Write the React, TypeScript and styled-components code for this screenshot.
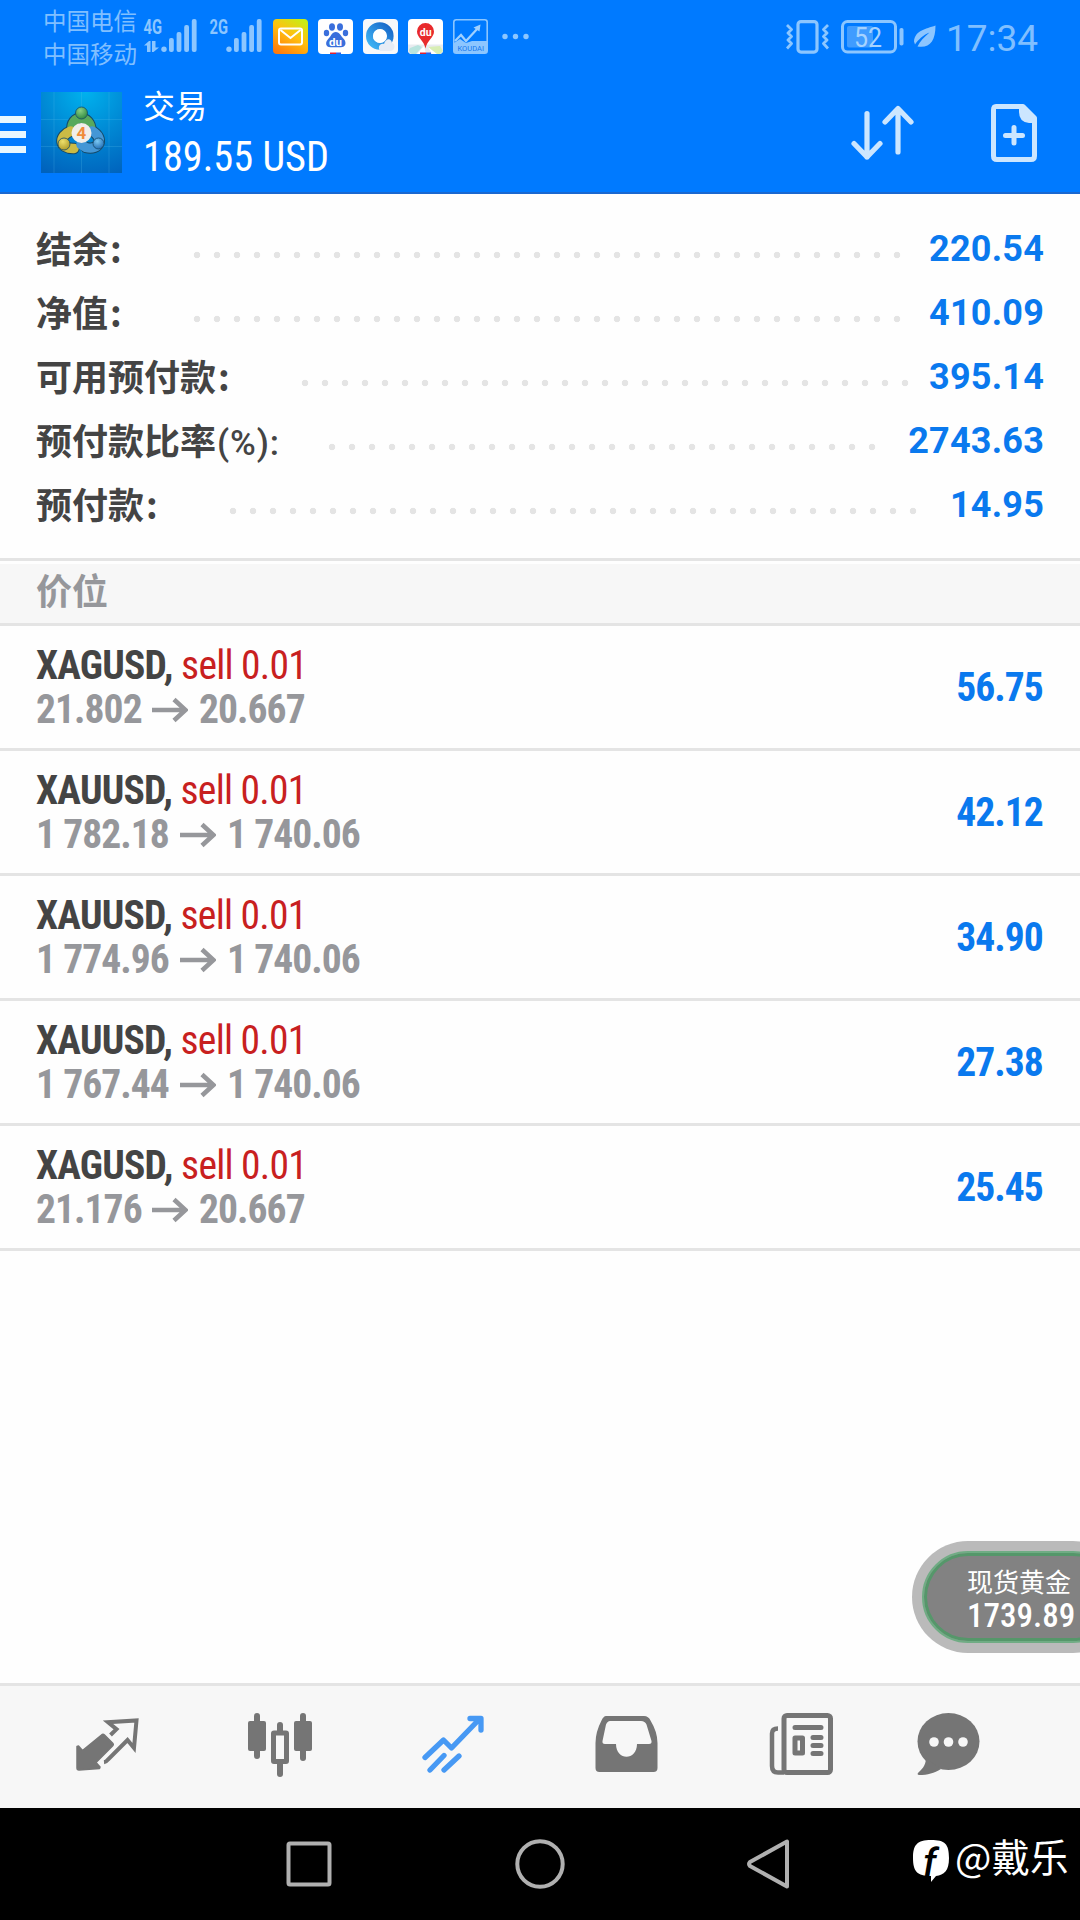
import React from 'react';
import styled, { createGlobalStyle } from 'styled-components';

const GlobalStyle = createGlobalStyle`
  * {
    box-sizing: border-box;
  }

  body {
    margin: 0;
    background: #fefefe;
    font-family: Roboto, 'Noto Sans CJK SC', sans-serif;
  }

  svg {
    display: block;
    flex: none;
  }
`;

const Screen = styled.div`
  display: flex;
  flex-direction: column;
  width: 1080px;
  height: 1920px;
  overflow: hidden;
  background: #fefefe;
`;

const Header = styled.header`
  height: 194px;
  background: #007aff;
  border-bottom: 2px solid #1a68d0;
`;

const StatusBar = styled.div`
  display: flex;
  align-items: flex-start;
  height: 73px;
  padding: 0 42px 0 43px;
  color: #80bfff;
`;

const Carriers = styled.div`
  width: 100px;
  padding-top: 4px;
  font-family: 'Noto Sans CJK SC', sans-serif;
  font-size: 23.5px;
  font-weight: 400;
  line-height: 33px;
  white-space: nowrap;
`;

const StatusIcons = styled.div`
  display: flex;
  gap: 10px;
  margin: 19px 0 0 9px;
`;

const StatusRight = styled.div`
  display: flex;
  align-items: flex-start;
  margin-left: auto;
  padding-top: 20px;
`;

const Clock = styled.div`
  width: 92px;
  margin: 0 0 0 10px;
  font-family: Roboto, sans-serif;
  font-size: 37px;
  font-weight: 400;
  line-height: 37px;
  white-space: nowrap;
`;

const Toolbar = styled.div`
  display: flex;
  align-items: flex-start;
  height: 119px;
  padding-right: 43px;
  color: #cce6ff;
`;

const MenuButton = styled.div`
  display: flex;
  flex-direction: column;
  gap: 8px;
  width: 26px;
  margin: 43px 15px 0 0;
`;

const MenuBar = styled.span`
  height: 7px;
  background: #e8f7ff;
`;

const Title = styled.div`
  margin-left: 21px;
  padding-top: 11px;
  color: #fff;
`;

const TitleName = styled.div`
  height: 48px;
  font-family: 'Noto Sans CJK SC', sans-serif;
  font-size: 32px;
  line-height: 40px;
`;

const Condensed = styled.div<{ $size: number; $weight?: number; $scale?: number; $spacing?: number; $right?: boolean }>`
  font-family: 'Roboto Condensed', Roboto, sans-serif;
  font-size: ${(p) => p.$size}px;
  font-weight: ${(p) => p.$weight || 400};
  letter-spacing: ${(p) => p.$spacing || 0}px;
  transform: scaleX(${(p) => p.$scale || 1});
  transform-origin: ${(p) => (p.$right ? 'right' : 'left')} center;
  white-space: nowrap;
`;

const Actions = styled.div`
  display: flex;
  gap: 77px;
  margin: 31px 0 0 auto;
`;

const Summary = styled.section`
  height: 364px;
  padding: 22px 37px 0 36px;
`;

const SummaryRow = styled.div`
  display: flex;
  align-items: center;
  height: 64px;
`;

const SummaryLabel = styled.div<{ $width: number }>`
  width: ${(p) => p.$width}px;
  margin-top: -2px;
  color: #444;
  font-family: 'Noto Sans CJK SC', sans-serif;
  font-size: 36px;
  font-weight: 700;
  line-height: 62px;
  white-space: nowrap;
`;

const Colon = styled.span`
  margin-left: 2px;
`;

const Narrow = styled.span`
  margin-left: 1px;
  font-family: Roboto, sans-serif;
  font-size: 35px;
  font-weight: 500;
  letter-spacing: 0.9px;
  line-height: 0;
`;

const Dots = styled.div<{ $count: number }>`
  width: ${(p) => p.$count * 20}px;
  height: 8px;
  margin-top: 14px;
  background: radial-gradient(circle at 10px 4px, #e4e4e4 2.9px, transparent 3.6px) 0 0 / 20px 8px repeat-x;
`;

const SummaryValue = styled.div`
  margin-top: 2px;
  margin-left: auto;
  margin-right: -1px;
  color: #0a79ee;
  font-size: 36px;
  font-weight: 700;
  letter-spacing: 0.2px;
  line-height: 62px;
`;

const SectionTitle = styled.div`
  height: 68px;
  padding-left: 36px;
  background: #f7f7f7;
  border-top: 3px solid #e4e4e4;
  border-bottom: 3px solid #e4e4e4;
  box-shadow: inset 0 3px 0 #fefefe;
  color: #96979b;
  font-family: 'Noto Sans CJK SC', sans-serif;
  font-size: 36px;
  font-weight: 700;
  line-height: 57px;
`;

const PositionRow = styled.div`
  display: flex;
  align-items: center;
  justify-content: space-between;
  height: 125px;
  padding: 0 37px 0 36px;
  border-bottom: 3px solid #e4e4e4;
`;

const Symbol = styled.div`
  height: 44px;
  color: #444;
  line-height: 44px;
`;

const Side = styled.span`
  color: #c8201f;
  font-weight: 400;
`;

const Prices = styled.div`
  display: flex;
  align-items: center;
  height: 44px;
  color: #96979b;
  line-height: 44px;
`;

const PriceText = styled.div<{ $width: number }>`
  width: ${(p) => p.$width}px;
`;

const Profit = styled.div`
  color: #0a79ee;
`;

const Spacer = styled.div`
  flex: 1;
`;

const TabBar = styled.nav`
  display: flex;
  height: 125px;
  padding-left: 76px;
  background: #f7f7f7;
  border-top: 3px solid #e4e4e4;
`;

const SystemNav = styled.div`
  display: flex;
  align-items: flex-start;
  height: 112px;
  padding: 31px 0 0 285px;
  background: #000;
  color: #fff;
`;

const Signature = styled.div`
  display: flex;
  margin-left: 123px;
  font-family: 'Noto Sans CJK SC', sans-serif;
  font-size: 38.5px;
  font-weight: 400;
  line-height: 32px;
  white-space: nowrap;
`;

const Quote = styled.div`
  position: absolute;
  top: 1541px;
  left: 912px;
  width: 168px;
  height: 112px;
  overflow: hidden;
`;

const QuotePill = styled.div`
  width: 217px;
  height: 112px;
  padding: 10px;
  border-radius: 56px;
  background: #bababa;
`;

const QuoteBody = styled.div`
  height: 92px;
  padding: 12px 0 0 43px;
  border: 2px solid #70ac84;
  border-radius: 46px;
  box-shadow: inset 0 0 0 3px #55976a;
  background: #828282;
  color: #fff;
`;

const QuoteName = styled.div`
  height: 31px;
  font-family: 'Noto Sans CJK SC', sans-serif;
  font-size: 26px;
  line-height: 31px;
`;

const summary = [
  { label: '结余', width: 151, dots: 36, value: '220.54' },
  { label: '净值', width: 151, dots: 36, value: '410.09' },
  { label: '可用预付款', width: 259, dots: 31, value: '395.14' },
  { label: '预付款比率', suffix: '(%):', width: 286, dots: 28, value: '2743.63' },
  { label: '预付款', width: 187, dots: 35, value: '14.95' },
];

const positions = [
  { symbol: 'XAGUSD', open: '21.802', current: '20.667', width: 116, profit: '56.75' },
  { symbol: 'XAUUSD', open: '1 782.18', current: '1 740.06', width: 144, profit: '42.12' },
  { symbol: 'XAUUSD', open: '1 774.96', current: '1 740.06', width: 144, profit: '34.90' },
  { symbol: 'XAUUSD', open: '1 767.44', current: '1 740.06', width: 144, profit: '27.38' },
  { symbol: 'XAGUSD', open: '21.176', current: '20.667', width: 116, profit: '25.45' },
];

function Signal({ network, data }: { network: string; data?: boolean }) {
  const width = data ? 66 : 55;
  const start = data ? 21 : 20;
  return (
    <svg width={width} height="73" fill="#8cc6ff">
      <text x="0.500" y="34" fontFamily="Roboto" fontSize="21" fontWeight="700" textLength="18.5" lengthAdjust="spacingAndGlyphs">{network}</text>
      {data && (
        <path d="M1 45.500h3V52h3.500V41H6zM9 41h3.500v6.500h3.500L10.500 52H9z" />
      )}
      <circle cx={start} cy="49.300" r="2.700" />
      {[38, 32, 25, 19].map((y, i) => (
        <rect key={y} x={start + 5 + i * 7.6} y={y} width="4.800" height={52 - y} rx="2" />
      ))}
    </svg>
  );
}

function MailIcon() {
  return (
    <svg width="35" height="35">
      <defs>
        <linearGradient id="mail" x1="0.2" y1="1" x2="0.8" y2="0">
          <stop offset="0" stopColor="#ff7a0c" />
          <stop offset="0.55" stopColor="#ffc010" />
          <stop offset="1" stopColor="#c6ee14" />
        </linearGradient>
      </defs>
      <rect width="35" height="35" rx="4" fill="url(#mail)" />
      <rect x="6" y="9.500" width="23" height="16" rx="2" fill="none" stroke="#fff" strokeWidth="2" />
      <path d="M7.500 11l10 8 10-8" fill="none" stroke="#fff" strokeWidth="2" />
    </svg>
  );
}

function PawIcon() {
  return (
    <svg width="35" height="35">
      <rect width="35" height="35" rx="4" fill="#fff" />
      <g fill="#3a6fdc">
        <ellipse cx="14" cy="8" rx="3" ry="3.700" />
        <ellipse cx="22" cy="8" rx="3" ry="3.700" />
        <ellipse cx="8.500" cy="14" rx="2.700" ry="3.300" />
        <ellipse cx="27.500" cy="14" rx="2.700" ry="3.300" />
        <path d="M17.800 13c4 0 5 4 8 7 3 3.500 2 8.300-3 8.300H12.500c-5 0-5.500-5-2.500-8 3-3 3.800-7.300 7.800-7.300z" />
      </g>
      <text x="11" y="26.500" fontFamily="Roboto" fontSize="11.500" fontWeight="700" fill="#fff">du</text>
      <path d="M12 33.500h6V35h-6z" fill="#e02030" />
      <path d="M18 33.500h5V35h-5z" fill="#3060e0" />
    </svg>
  );
}

function BrowserIcon() {
  return (
    <svg width="35" height="35">
      <defs>
        <linearGradient id="ring" x1="1" y1="0" x2="0" y2="1">
          <stop offset="0" stopColor="#1766c8" />
          <stop offset="1" stopColor="#3fb5f5" />
        </linearGradient>
      </defs>
      <rect width="35" height="35" rx="4" fill="#f7f8fa" />
      <circle cx="16.800" cy="17" r="10.300" fill="none" stroke="url(#ring)" strokeWidth="7" />
      <circle cx="17" cy="17" r="7" fill="#fff" />
      <path d="M17 32c-3-5 1-8 4-7 2-6 7-6 8-1 4 1 3 7-1 8z" fill="#e6ecf5" />
    </svg>
  );
}

function MapIcon() {
  return (
    <svg width="35" height="35">
      <rect width="35" height="35" rx="4" fill="#fff" />
      <path d="M0 25.500h35V31q0 4-4 4H4q-4 0-4-4z" fill="#e9ebef" />
      <path d="M2 29l8-3 4 2-6 7H4q-3-1-3-4z" fill="#b8e4de" />
      <path d="M20 28l12-1 3 5-3 3h-6z" fill="#d8eeb4" />
      <path d="M9 35l7-8 2 8zM20 28l9 7h-5z" fill="#fff" />
      <path d="M17.500 4a8.500 8.500 0 0 1 8.500 8.500c0 6-7 9-8.500 17-1.500-8-8.500-11-8.500-17A8.500 8.500 0 0 1 17.500 4z" fill="#e82a2c" />
      <text x="11.800" y="17" fontFamily="Roboto" fontSize="10.500" fontWeight="700" fill="#fff">du</text>
      <path d="M12 33.500h6V35h-6z" fill="#e02030" />
      <path d="M18 33.500h5V35h-5z" fill="#3060e0" />
    </svg>
  );
}

function KoudaiIcon() {
  return (
    <svg width="35" height="35">
      <rect x="0.800" y="0.800" width="33.400" height="33.400" rx="2.500" fill="none" stroke="#8cc6ff" strokeWidth="1.600" />
      <path d="M1 24l6-4 6 4 6-2h15v12H1z" fill="#8cc6ff" />
      <path d="M2 22l6-6 5 6L25 9" fill="none" stroke="#9fd0ff" strokeWidth="2.200" />
      <path d="M27.500 5.500l-1 7-6-4z" fill="#9fd0ff" />
      <text x="4.500" y="31.500" fontFamily="Roboto" fontSize="7.500" fill="#1478ee" textLength="26.500" lengthAdjust="spacingAndGlyphs">KOUDAI</text>
    </svg>
  );
}

function VibrateIcon() {
  return (
    <svg width="43" height="34" fill="none" stroke="#8cc6ff" strokeWidth="3.200" strokeLinejoin="round">
      <rect x="12" y="1.600" width="19" height="30.500" rx="3" />
      <path d="M1 5l4.500 4.500L2 13l3.500 3.500L2 20l3.500 3.500L1 28.500M42 5l-4.500 4.500L41 13l-3.500 3.500L41 20l-3.500 3.500L42 28.500" strokeWidth="2.800" />
    </svg>
  );
}

function BatteryIcon({ level }: { level: number }) {
  return (
    <svg width="64" height="34">
      <rect x="1.500" y="1.500" width="53" height="30.500" rx="5" fill="none" stroke="#8cc6ff" strokeWidth="3" />
      <rect x="6" y="6" width={level * 0.5} height="21.500" rx="2" fill="#409cff" />
      <rect x="58.500" y="8" width="4" height="17.500" rx="1.800" fill="#8cc6ff" />
      <text x="13" y="26.500" fontFamily="Roboto" fontSize="27" fill="#a6d3ff" textLength="28" lengthAdjust="spacingAndGlyphs">{level}</text>
    </svg>
  );
}

function LeafIcon() {
  return (
    <svg width="22" height="34">
      <path d="M21.500 5.500c-10 3.500-20.500 5-21.500 16l1 3C4 20 9 15 15.500 12.500 10 17 6 21.500 3.500 26.500c12 2 18-5 18-21z" fill="#8cc6ff" />
    </svg>
  );
}

function Logo() {
  return (
    <svg width="81" height="81" style={{ marginTop: 19 }}>
      <defs>
        <radialGradient id="sky" cx="0.55" cy="0" r="1.1">
          <stop offset="0" stopColor="#00b2ee" />
          <stop offset="0.5" stopColor="#0088d4" />
          <stop offset="1" stopColor="#0062bc" />
        </radialGradient>
        <radialGradient id="green" cx="0.4" cy="0.3" r="0.8">
          <stop offset="0" stopColor="#8ccf82" />
          <stop offset="1" stopColor="#23813a" />
        </radialGradient>
        <radialGradient id="gold" cx="0.4" cy="0.3" r="0.8">
          <stop offset="0" stopColor="#eddf6b" />
          <stop offset="1" stopColor="#aa9422" />
        </radialGradient>
        <radialGradient id="azure" cx="0.4" cy="0.3" r="0.8">
          <stop offset="0" stopColor="#7cc9f3" />
          <stop offset="1" stopColor="#1763ae" />
        </radialGradient>
      </defs>
      <rect width="81" height="81" fill="url(#sky)" />
      <path d="M13 0v81M40.500 0v81M68 0v81M0 27.500h81M0 54.500h81" stroke="#5cc4ee" strokeOpacity="0.22" />
      <g fill="none" strokeLinecap="round">
        <g stroke="#164a68" strokeWidth="11.500">
          <path d="M31 39c-2-17 19-17 19 0" />
          <path d="M30 39c-13 5-12 18 3 17.500" />
          <path d="M51 39c13 7 7 20-6 16.500" />
        </g>
        <path d="M31 39c-2-17 19-17 19 0" stroke="#58a95c" strokeWidth="9.500" />
        <path d="M30 39c-13 5-12 18 3 17.500" stroke="#cbbb45" strokeWidth="9.500" />
        <path d="M51 39c13 7 7 20-6 16.500l-5-3" stroke="#4497d6" strokeWidth="9.500" />
      </g>
      <g stroke="#164a68" strokeWidth="0.800">
        <circle cx="40.500" cy="21" r="6" fill="url(#green)" />
        <circle cx="23" cy="52" r="6" fill="url(#gold)" />
        <circle cx="57.500" cy="51.500" r="5.500" fill="url(#azure)" />
      </g>
      <circle cx="40.500" cy="41" r="10" fill="#f1eeea" />
      <text x="40.500" y="47" textAnchor="middle" fontFamily="Roboto" fontSize="17" fontWeight="700" fill="#f08c3c">4</text>
    </svg>
  );
}

function SortIcon() {
  return (
    <svg width="63" height="58" fill="none" stroke="currentColor" strokeWidth="5.200" strokeLinecap="round" strokeLinejoin="round">
      <path d="M16 9.500V53M3 39.500L16 53l13-13.500M47 48V4.500M34 18L47 4.500 60 18" />
    </svg>
  );
}

function NewOrderIcon() {
  return (
    <svg width="46" height="58">
      <path d="M5 2.500h27L43.500 14v38q0 3.500-3.500 3.500H6q-3.500 0-3.500-3.500V6q0-3.500 2.500-3.500z" fill="none" stroke="currentColor" strokeWidth="5" strokeLinejoin="round" />
      <path d="M28 3h5l11 11v5h-6Q28 18 28 8z" fill="currentColor" />
      <path d="M23 23.500V39M14.500 31.500h17" stroke="currentColor" strokeWidth="5" strokeLinecap="round" />
    </svg>
  );
}

function Arrow() {
  return (
    <svg width="36" height="26" style={{ margin: '1px 11px 0 0' }}>
      <path d="M0 13h34M22 2.500L33.500 13 22 23.500" fill="none" stroke="#96979b" strokeWidth="4.600" />
    </svg>
  );
}

function Tabs() {
  return (
    <TabBar>
      <svg width="64" height="122" style={{ marginRight: 106 }}>
        <path d="M25.500 48q1.500-1.500 3 0l8 8q1.500 1.500 0 3L20 75.500l4 4.500-.500 1.500L3 83q-2 0-2-2V59.500l1.500-.500L6.500 63.500z" fill="#757575" stroke="#757575" strokeWidth="1.500" strokeLinejoin="round" transform="translate(0 1)" />
        <path d="M35 47l6-5.800-8.500-7L61 32.500 58.500 60l-6.500-8L32.500 71.500q-2 2.500-4 2.700" fill="none" stroke="#757575" strokeWidth="4" transform="translate(-.500 2)" />
      </svg>
      <svg width="68" height="122" fill="#757575" style={{ marginRight: 106 }}>
        <rect x="2" y="35" width="18" height="30" rx="2" />
        <rect x="8" y="27" width="6" height="46" rx="3" />
        <rect x="48" y="35" width="18" height="30" rx="2" />
        <rect x="54" y="27" width="6" height="48" rx="3" />
        <rect x="31" y="36" width="6" height="12" rx="3" />
        <rect x="31" y="74" width="6" height="17" rx="3" />
        <rect x="27.500" y="47" width="13" height="28.500" rx="0.500" fill="none" stroke="#757575" strokeWidth="5" strokeLinejoin="round" />
      </svg>
      <svg width="66" height="122" fill="none" stroke="#4799f4" strokeWidth="5.300" strokeLinecap="round" strokeLinejoin="round" style={{ marginRight: 108 }}>
        <path d="M5 71.500l18.500-17.500 8 8L60 32.500M50 32.500h11v11.500" />
        <path d="M10 84l14-14.500M24 84l15-14" />
      </svg>
      <svg width="66" height="122" style={{ marginRight: 109 }}>
        <path d="M13.500 30h38q4.500 0 6.500 4.500Q65 46 65 57v25q0 4-4 4H7q-4 0-4-4V57Q3 46 9 34.500 11 30 13.500 30z" fill="#757575" transform="translate(-1.500)" />
        <path d="M17 35h31q4 0 5.500 3.500L58.500 55q.500 3-2.500 3H44c0 17-21 17-21 0H12q-3 0-2.500-3l3.500-16.500Q14.500 35 17 35z" fill="#f7f7f7" transform="translate(-1)" />
      </svg>
      <svg width="66" height="122" style={{ marginRight: 82 }} fill="none" stroke="#757575">
        <rect x="15" y="29.500" width="46.500" height="57" rx="3" strokeWidth="5" />
        <path d="M9 42.500q-6 0-6 5V80q0 6.500 6 6.500h6" strokeWidth="4.500" />
        <g strokeWidth="5" strokeLinecap="round">
          <path d="M26 41.500h26M44 51.500h8M44 59.500h8M44 67.500h8" />
          <rect x="26" y="52" width="7.500" height="15" strokeLinejoin="round" />
        </g>
      </svg>
      <svg width="64" height="122" fill="#757575">
        <ellipse cx="31.500" cy="55.500" rx="31" ry="28.500" />
        <path d="M9 72c0 8-5 12-8 15-1 1 0 2 1 2 9 0 15-2 22-6z" />
        <g fill="#f7f7f7">
          <circle cx="17" cy="56" r="4.800" />
          <circle cx="31.500" cy="56" r="4.800" />
          <circle cx="46" cy="56" r="4.800" />
        </g>
      </svg>
    </TabBar>
  );
}

function App() {
  return (
    <Screen>
      <GlobalStyle />
      <Header>
        <StatusBar>
          <Carriers>
            <div>中国电信</div>
            <div>中国移动</div>
          </Carriers>
          <Signal network="4G" data />
          <Signal network="2G" />
          <StatusIcons>
            <MailIcon />
            <PawIcon />
            <BrowserIcon />
            <MapIcon />
            <KoudaiIcon />
            <svg width="36" height="35" fill="#8cc6ff">
              <circle cx="7" cy="17.500" r="2.700" />
              <circle cx="17.500" cy="17.500" r="2.700" />
              <circle cx="28" cy="17.500" r="2.700" />
            </svg>
          </StatusIcons>
          <StatusRight>
            <VibrateIcon />
            <svg width="12" height="34" />
            <BatteryIcon level={52} />
            <svg width="9" height="34" />
            <LeafIcon />
            <Clock>17:34</Clock>
          </StatusRight>
        </StatusBar>
        <Toolbar>
          <MenuButton>
            <MenuBar />
            <MenuBar />
            <MenuBar />
          </MenuButton>
          <Logo />
          <Title>
            <TitleName>交易</TitleName>
            <Condensed $size={42} $scale={0.96}>189.55 USD</Condensed>
          </Title>
          <Actions>
            <SortIcon />
            <NewOrderIcon />
          </Actions>
        </Toolbar>
      </Header>
      <Summary>
        {summary.map((row) => (
          <SummaryRow key={row.label}>
            <SummaryLabel $width={row.width}>
              {row.label}
              {row.suffix ? <Narrow>{row.suffix}</Narrow> : <Colon>:</Colon>}
            </SummaryLabel>
            <Dots $count={row.dots} />
            <SummaryValue>{row.value}</SummaryValue>
          </SummaryRow>
        ))}
      </Summary>
      <SectionTitle>价位</SectionTitle>
      {positions.map((row) => (
        <PositionRow key={row.open}>
          <div>
            <Symbol>
              <Condensed $size={41} $weight={700} $scale={0.965} $spacing={-0.8}>
                {row.symbol}, <Side>sell 0.01</Side>
              </Condensed>
            </Symbol>
            <Prices>
              <PriceText $width={row.width}>
                <Condensed $size={41} $weight={700} $scale={0.965} $spacing={-1}>{row.open}</Condensed>
              </PriceText>
              <Arrow />
              <Condensed $size={41} $weight={700} $scale={0.965} $spacing={-1}>{row.current}</Condensed>
            </Prices>
          </div>
          <Profit>
            <Condensed $size={41} $weight={700} $scale={0.965} $spacing={-1} $right>{row.profit}</Condensed>
          </Profit>
        </PositionRow>
      ))}
      <Spacer />
      <Tabs />
      <SystemNav>
        <svg width="505" height="60" fill="none" stroke="#b0b0b0" strokeWidth="4" strokeLinejoin="round">
          <rect x="3.500" y="4.500" width="41" height="41" rx="1.500" />
          <circle cx="255" cy="25" r="22.700" />
          <path d="M502 2.500v45L465 27q-2-2 0-4z" />
        </svg>
        <Signature>
          <svg width="42" height="46" style={{ marginTop: 1 }}>
            <path d="M18 0c14 0 18 4 18 18 0 13-5 17-13 18l-5 6v-6C4 36 0 31 0 18S4 0 18 0z" fill="#fff" />
            <text x="10" y="36" fontFamily="Roboto" fontSize="39" fontStyle="italic" fontWeight="500" fill="#000">f</text>
          </svg>
          @戴乐
        </Signature>
      </SystemNav>
      <Quote>
        <QuotePill>
          <QuoteBody>
            <QuoteName>现货黄金</QuoteName>
            <Condensed $size={33} $weight={500}>1739.89</Condensed>
          </QuoteBody>
        </QuotePill>
      </Quote>
    </Screen>
  );
}

export default App;
